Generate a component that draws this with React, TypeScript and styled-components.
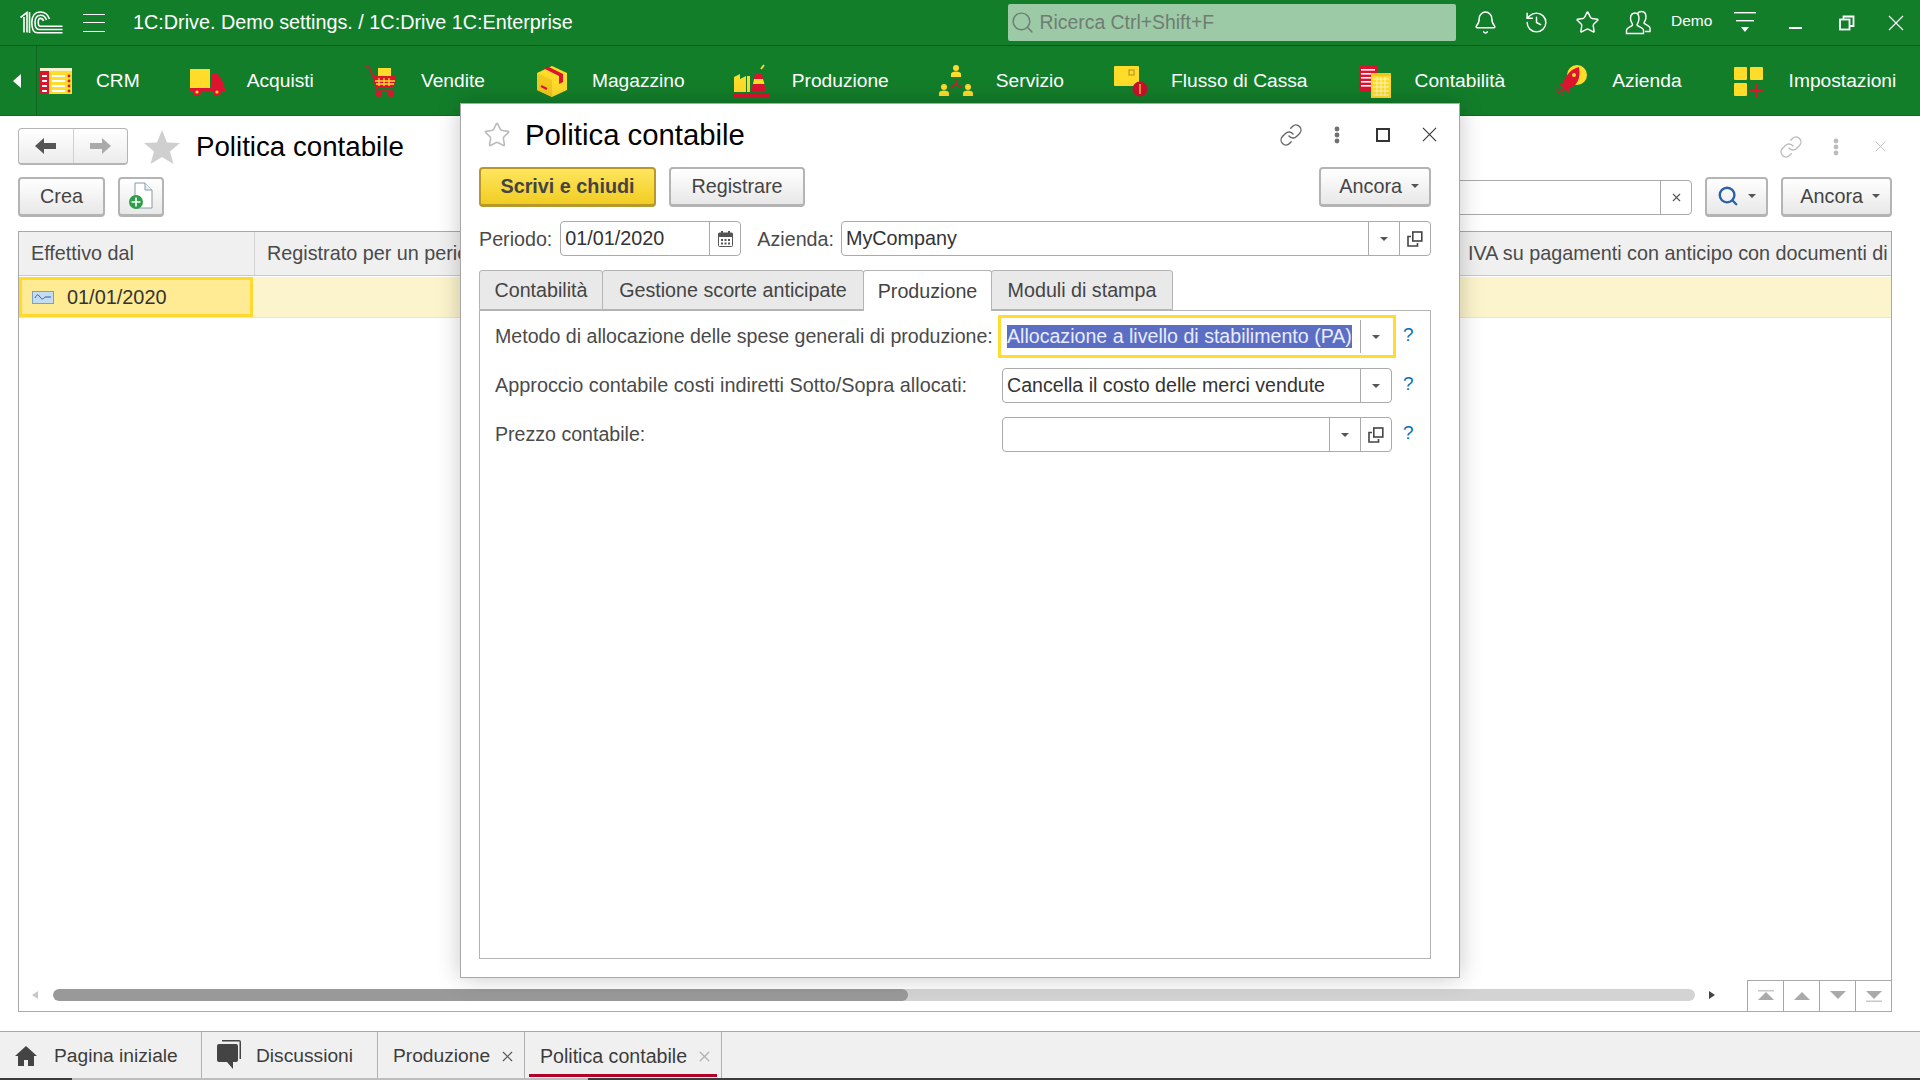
import React from 'react';
import styled, { createGlobalStyle } from 'styled-components';
import { Bell, History, Star, Link as LinkIcon, X, Search as SearchIcon } from 'lucide-react';

const Global = createGlobalStyle`
  html, body { margin: 0; padding: 0; height: 100%; overflow: hidden; background: #fff; }
  #root { height: 100%; }
  * { box-sizing: border-box; }
  body { font-family: "Liberation Sans", Arial, sans-serif; font-size: 19.7px; color: #4a4a4a; }
`;

const Screen = styled.div`
  position: relative; width: 1920px; height: 1080px; display: flex; flex-direction: column; overflow: hidden;
`;
const TopBar = styled.header`
  height: 46px; flex: none; background: #137e2a; border-bottom: 1px solid #0b5a1a; display: flex; align-items: center; color: #fff; padding-left: 20px;
`;
const Burger = styled.div`
  width: 22px; height: 18px; margin-left: 19px; border-top: 1px solid #fff; border-bottom: 1px solid #fff; position: relative;
  &::after { content: ''; position: absolute; left: 0; right: 0; top: 7px; height: 1px; background: #fff; }
`;
const AppTitle = styled.div`
  margin-left: 28px; flex: 1; font-size: 19.8px; white-space: nowrap;
`;
const GlobalSearch = styled.div`
  width: 448px; height: 37px; background: #9ccaa6; border-radius: 2px; color: #6f7d73; display: flex; align-items: center; padding-left: 2px; gap: 5px; font-size: 19.4px; margin-right: 4px;
`;
const TopIcon = styled.div<{ $w?: number }>`
  width: ${p => p.$w ?? 51}px; height: 45px; display: flex; align-items: center; justify-content: center; flex: none; color: #fff;
`;
const UserName = styled.div`
  font-size: 15.5px; margin: -3px 6px 0 7.5px; width: 42px; flex: none; white-space: nowrap;
`;
const FilterIcon = styled.div`
  width: 51px; flex: none; display: flex; justify-content: center;
`;
const Sections = styled.nav`
  height: 70px; flex: none; background: #137e2a; display: flex; align-items: center; position: relative; color: #fff; border-bottom: 1px solid #0f6a22;
`;
const SectionArrow = styled.div`
  width: 37px; height: 100%; flex: none; border-right: 1px solid #0f6520; display: flex; align-items: center; justify-content: center;
  &::before { content: ''; border-style: solid; border-width: 7px 8px 7px 0; border-color: transparent #fff transparent transparent; margin-left: -2px; }
`;
const SectionList = styled.div`
  display: flex; align-items: center; gap: 49px; padding-left: 1px; white-space: nowrap;
`;
const SectionItem = styled.div`
  display: flex; align-items: center; gap: 22px; font-size: 19.2px;
`;
const Page = styled.main`
  flex: 1; min-height: 0; display: flex; flex-direction: column; padding: 12px 28px 19px 18px;
`;
const TitleRow = styled.div`
  height: 37px; display: flex; align-items: center; flex: none;
`;
const NavGroup = styled.div`
  width: 110px; height: 37px; display: flex; border: 1px solid #b4b4b4; border-bottom-width: 2px; border-radius: 4px; background: linear-gradient(#fff, #ececec);
`;
const NavCell = styled.div<{ $first?: boolean }>`
  flex: 1; display: flex; align-items: center; justify-content: center; ${p => (p.$first ? 'border-right: 1px solid #d0d0d0;' : '')}
`;
const PageStar = styled.svg`
  margin-left: 16px; flex: none;
`;
const PageTitle = styled.h1`
  margin: 0 0 0 16px; font-size: 27.7px; font-weight: 400; color: #000; flex: 1; white-space: nowrap;
`;
const GhostIcons = styled.div`
  display: flex; align-items: center; color: #bcbcbc; margin-right: -11px;
`;
const GhostCell = styled.div`
  width: 45px; display: flex; justify-content: center;
`;
const Toolbar = styled.div`
  margin-top: 12px; height: 40px; display: flex; align-items: center; flex: none;
`;
const Btn = styled.button<{ $w: number; $primary?: boolean; $ml?: number; $menu?: boolean }>`
  width: ${p => p.$w}px; height: 40px; flex: none; border-radius: 4px; margin-left: ${p => p.$ml ?? 0}px; display: flex; align-items: center; gap: 9px;
  padding: ${p => (p.$menu ? '0 10px 1px 0' : '0 0 1px')}; justify-content: ${p => (p.$menu ? 'flex-end' : 'center')};
  font: ${p => (p.$primary ? '700' : '400')} 19.8px "Liberation Sans", Arial, sans-serif; color: #444;
  border: 2px solid ${p => (p.$primary ? '#b8982a' : '#b4b4b4')}; border-bottom-width: 3px;
  background: ${p => (p.$primary ? 'linear-gradient(#ffe55e, #f1cd22)' : 'linear-gradient(#fff, #e8e8e8)')};
`;
const Caret = styled.span`
  width: 0; height: 0; border-style: solid; border-width: 4px 4px 0 4px; border-color: #555 transparent transparent transparent; flex: none;
`;
const Spacer = styled.div`
  flex: 1;
`;
const SearchField = styled.div`
  width: 500px; height: 35px; border: 1px solid #aaa; border-radius: 0 4px 4px 0; display: flex; justify-content: flex-end; margin-right: 13px;
`;
const ClearCell = styled.div`
  width: 31px; border-left: 1px solid #aaa; display: flex; align-items: center; justify-content: center; color: #555;
`;
const Table = styled.section`
  margin-top: 14px; flex: 1; min-height: 0; border: 1px solid #a8a8a8; display: flex; flex-direction: column;
`;
const THead = styled.div`
  height: 44px; flex: none; display: flex; background: #f0f0f0; border-bottom: 1px solid #c8c8c8;
`;
const THCell = styled.div<{ $w?: number }>`
  ${p => (p.$w ? `width: ${p.$w}px; flex: none;` : 'flex: 1;')} overflow: hidden; white-space: nowrap; display: flex; align-items: center; padding: 0 0 1px 12px; font-size: 19.8px; color: #4a4a4a;
  & + & { border-left: 1px solid #d4d4d4; }
`;
const TRow = styled.div`
  margin-top: 1px; height: 41px; flex: none; display: flex; background: #fcf4cc; border-bottom: 1px solid #e4e4e4;
`;
const TCellSelected = styled.div`
  width: 234px; flex: none; background: #ffeb93; border: 3px solid #ffd92e; display: flex; align-items: center; padding-left: 10px; gap: 13px; color: #333; font-size: 19.9px;
`;
const TFill = styled.div`
  flex: 1;
`;
const TableFooter = styled.div`
  margin-top: auto; height: 31px; flex: none; display: flex; align-items: flex-start;
`;
const ScrollArea = styled.div`
  flex: 1; display: flex; align-items: center; height: 30px; padding: 0 0 1px 13px;
`;
const ScrollArrow = styled.span<{ $right?: boolean }>`
  width: 0; height: 0; border-style: solid; flex: none;
  ${p => (p.$right
    ? 'border-width: 4px 0 4px 6px; border-color: transparent transparent transparent #444; margin: 0 32px 0 14px;'
    : 'border-width: 4px 6px 4px 0; border-color: transparent #c8c8c8 transparent transparent; margin-right: 15px;')}
`;
const ScrollTrack = styled.div`
  flex: 1; height: 12px; border-radius: 6px; background: #d3d3d3; overflow: hidden;
`;
const ScrollThumb = styled.div`
  width: 855px; height: 100%; background: #999; border-radius: 6px;
`;
const PagerCell = styled.div`
  width: 36px; height: 32px; flex: none; margin-bottom: -1px; border: 1px solid #a8a8a8; border-right-width: 0; display: flex; align-items: center; justify-content: center;
`;
const WinTabs = styled.footer`
  height: 47px; flex: none; display: flex; background: #f0f0f0; border-top: 1px solid #a8a8a8;
`;
const WinTab = styled.div<{ $w: number; $active?: boolean }>`
  width: ${p => p.$w}px; flex: none; position: relative; display: flex; align-items: center; padding: 2px 0 0 15px; gap: 12px; border-right: 1px solid #b0b0b0; font-size: ${p => (p.$active ? 19.6 : 19.2)}px; color: #3c3c3c; white-space: nowrap;
  ${p => (p.$active ? `&::after { content: ''; position: absolute; left: 4px; right: 4px; bottom: 1px; height: 3px; background: #b0002a; }` : '')}
`;
const WinTabLabel = styled.span<{ $ml: number }>`
  margin-left: ${p => p.$ml}px;
`;
const TabClose = styled.span<{ $muted?: boolean }>`
  display: flex; margin-left: -3px; color: ${p => (p.$muted ? '#b0b0b0' : '#555')};
`;
const Strip = styled.div`
  height: 2px; flex: none; display: flex; background: #3c3c3c;
`;
const StripLight = styled.div`
  width: 516px; margin-left: 72px; background: #bdbdbd;
`;
const Modal = styled.div`
  position: absolute; left: 460px; top: 103px; width: 1000px; height: 875px; background: #fff; border: 1px solid #a8a8a8; box-shadow: 0 0 22px rgba(0, 0, 0, 0.22); display: flex; flex-direction: column; padding: 0 28px 18px 18px;
`;
const ModalHead = styled.div`
  height: 63px; flex: none; display: flex; align-items: center; padding: 0 0 2px 4px;
`;
const ModalTitle = styled.h2`
  margin: 0 0 0 14px; flex: 1; font-size: 29.3px; font-weight: 400; color: #000; white-space: nowrap;
`;
const ModalActions = styled.div`
  display: flex; align-items: center; margin-right: -21px; color: #666;
`;
const ActionCell = styled.div`
  width: 46px; display: flex; justify-content: center;
`;
const ModalBar = styled.div`
  height: 40px; flex: none; display: flex; gap: 13px;
`;
const FieldLabel = styled.label<{ $ml?: number }>`
  font-size: 19.7px; color: #4a4a4a; margin-left: ${p => p.$ml ?? 0}px; padding-top: 1px; white-space: nowrap;
`;
const Field = styled.div<{ $w?: number; $ml?: number; $focus?: boolean }>`
  ${p => (p.$w ? `width: ${p.$w}px; flex: none;` : 'flex: 1;')}
  height: 35px; margin-left: ${p => p.$ml ?? 0}px; border: 1px solid #aaa; border-radius: 4px; display: flex; align-items: stretch; background: #fff; font-size: 19.6px; color: #333;
  ${p => (p.$focus ? 'outline: 3px solid #ffdc2e; outline-offset: 1px; border-color: #fff; border-radius: 0;' : '')}
`;
const FieldValue = styled.div`
  flex: 1; min-width: 0; display: flex; align-items: center; padding: 0 0 1px 4px; white-space: nowrap; overflow: hidden;
`;
const HeaderFields = styled.div`
  margin-top: 14px; height: 35px; flex: none; display: flex; align-items: center;
  ${FieldValue} { padding-bottom: 0; font-size: 19.8px; }
`;
const FieldButton = styled.div`
  width: 31px; flex: none; border-left: 1px solid #aaa; display: flex; align-items: center; justify-content: center;
`;
const Selected = styled.span`
  background: #5b6ec4; color: #e8ecff;
`;
const TabStrip = styled.div`
  margin-top: 14px; height: 40px; flex: none; display: flex; position: relative; z-index: 1;
`;
const Tab = styled.div<{ $w: number; $active?: boolean }>`
  width: ${p => p.$w}px; flex: none; height: ${p => (p.$active ? 41 : 40)}px; border: 1px solid #b4b4b4; border-radius: 3px 3px 0 0; margin-right: -1px; display: flex; align-items: center; justify-content: center; font-size: 19.7px; color: #444; white-space: nowrap;
  background: ${p => (p.$active ? '#fff' : '#e9e9e9')}; ${p => (p.$active ? 'border-bottom: none;' : '')}
`;
const TabPanel = styled.div`
  flex: 1; min-height: 0; border: 1px solid #b4b4b4; padding: 8px 0 0 15px; display: grid; grid-template-columns: 507px 390px auto; grid-auto-rows: 35px; row-gap: 14px; align-items: center; align-content: start;
`;
const RowLabel = styled.div<{ $size: number }>`
  font-size: ${p => p.$size}px; color: #4a4a4a; white-space: nowrap; margin-top: -1px;
`;
const Help = styled.div`
  font-size: 19px; color: #0a6fb5; margin: -3px 0 0 11px;
`;

const Tri = ({ c = '#555', s = 4 }: { c?: string; s?: number }) => (
  <svg width={s * 2} height={s} viewBox="0 0 8 4"><path d="M0 0h8L4 4z" fill={c} /></svg>
);
const OpenIcon = () => (
  <svg width="16" height="16" viewBox="0 0 16 16" fill="none" stroke="#444" strokeWidth="1.6">
    <rect x="5.8" y="1" width="9" height="9" />
    <path d="M4 5.5H1v9.5h9.5v-3" />
  </svg>
);
const CalendarGlyph = () => (
  <svg width="15" height="16" viewBox="0 0 15 16">
    <rect x="0.500" y="2" width="14" height="13.500" rx="1" fill="#fff" stroke="#555" />
    <rect x="0.500" y="2" width="14" height="4" fill="#555" />
    <rect x="3" y="0" width="2" height="3.500" fill="#555" /><rect x="10" y="0" width="2" height="3.500" fill="#555" />
    <g fill="#555">
      <rect x="3" y="8" width="2" height="2" /><rect x="6.500" y="8" width="2" height="2" /><rect x="10" y="8" width="2" height="2" />
      <rect x="3" y="11.500" width="2" height="2" /><rect x="6.500" y="11.500" width="2" height="2" /><rect x="10" y="11.500" width="2" height="2" />
    </g>
  </svg>
);
const NavArrow = ({ dir, c }: { dir: 'l' | 'r'; c: string }) => (
  <svg width="21" height="16" viewBox="0 0 21 16" fill={c}>
    {dir === 'l' ? <path d="M0 8l9-8v5h12v6H9v5z" /> : <path d="M21 8l-9-8v5H0v6h12v5z" />}
  </svg>
);
const Dots = ({ c }: { c: string }) => (
  <svg width="6" height="18" viewBox="0 0 6 18" fill={c}><circle cx="3" cy="3" r="2.4" /><circle cx="3" cy="9" r="2.4" /><circle cx="3" cy="15" r="2.4" /></svg>
);
const Logo = () => (
  <svg width="44" height="23" viewBox="0 0 44 23" fill="none" stroke="#fff" strokeWidth="1.6">
    <path d="M0.5 6.5 7 1.5V21.5" />
    <path d="M4 6V21.5M9.5 1V22" />
    <path d="M42.5 21.8H17.5C13 21.8 11.8 17 11.8 11.5 11.8 5 15 1 20.5 1 25 1 28 3.5 29.5 8" />
    <path d="M42.5 18.5H19C16 18.5 15 15 15 11.5 15 7 17 4.2 20.5 4.2 23.5 4.2 25.5 6 26.5 9" />
    <path d="M42.5 15.2H20.5C19 15.2 18.2 13.5 18.2 11.5 18.2 9 19 7.4 20.5 7.4 22 7.4 23 8.4 23.5 10" />
  </svg>
);
const UsersIcon = () => (
  <svg width="26" height="26" viewBox="0 0 26 26" fill="none" stroke="#fff" strokeWidth="1.4">
    <path d="M1.5 23.5v-3.5c0-2 5-3.5 6-5 .5-1-2-3-2-6.5 0-3.5 2-5.500 4.500-5.500s4 2 4 5.500c0 3.500-2 5.500-2 6.500 1 1.500 6.500 3 6.500 5v3.500z" />
    <path d="M12.500 3.500C13.500 2 15 1.500 16.500 1.500c2.500 0 4.500 2 4.500 5.500 0 3.500-2 5-2 6 1 1.500 6 3 6 5v3.500h-5" />
  </svg>
);
const FilterGlyph = () => (
  <svg width="22" height="24" viewBox="0 0 22 24" fill="#fff">
    <rect y="1" width="22" height="1.4" /><rect x="2" y="9" width="18" height="1.4" /><path d="M7 16h8l-4 5z" />
  </svg>
);
const WinMin = () => <svg width="16" height="16" viewBox="0 0 16 16"><rect x="1" y="12" width="13" height="2" fill="#fff" /></svg>;
const WinRestore = () => (
  <svg width="16" height="16" viewBox="0 0 16 16" fill="none" stroke="#fff" strokeWidth="1.800"><rect x="1" y="4.500" width="9.500" height="10" /><path d="M4.500 4V1.500H14.500V11H11" /></svg>
);
const ThinX = ({ s, c }: { s: number; c: string }) => (
  <svg width={s} height={s} viewBox="0 0 16 16" fill="none" stroke={c} strokeWidth="1.2"><path d="M1 1l14 14M15 1L1 15" /></svg>
);
const Y = '#ffdc2a';
const R = '#dc1430';
const SIcon = ({ children }: { children: React.ReactNode }) => (
  <svg width="36" height="36" viewBox="0 0 36 36">{children}</svg>
);
const IconCRM = () => (
  <SIcon>
    <rect x="2" y="5" width="32" height="26" fill={Y} />
    <rect x="2" y="5" width="32" height="3" fill="#f4f0d0" />
    <rect x="2" y="8" width="9" height="23" fill={R} />
    {[12, 17, 22, 27].map(y => (
      <g key={y}>
        <rect x="4" y={y} width="5" height="2" fill="#fff" />
        <rect x="14" y={y} width="13" height="2" fill="#fff" />
        <circle cx="31" cy={y + 1} r="1.400" fill={R} />
      </g>
    ))}
  </SIcon>
);
const IconTruck = () => (
  <SIcon>
    <rect x="1" y="6" width="20" height="19" fill={Y} />
    <path d="M22 11h7l5 8v7H22z" fill={R} />
    <path d="M0 25h36v3H0z" fill={R} />
    <circle cx="8" cy="29" r="4" fill={R} /><circle cx="8" cy="29" r="1.600" fill={Y} />
    <circle cx="28" cy="29" r="4" fill={R} /><circle cx="28" cy="29" r="1.600" fill={Y} />
  </SIcon>
);
const IconCart = () => (
  <SIcon>
    <path d="M3 4h3l4 9 4 14h17" fill="none" stroke={R} strokeWidth="1.500" />
    <rect x="15" y="5" width="13" height="8" fill={Y} />
    <path d="M10 13h23l-2 11H13z" fill={R} />
    <path d="M16 15v8M21 15v8M26 15v8M12 18h20M13 21h18" stroke={Y} strokeWidth="1.300" />
    <circle cx="16" cy="31" r="3" fill={R} /><circle cx="28" cy="31" r="3" fill={R} />
  </SIcon>
);
const IconBox = () => (
  <SIcon>
    <path d="M18 3l15 7v17l-15 7-15-7V10z" fill={Y} />
    <path d="M18 17v17l-15-7V10z" fill="#f3c91f" />
    <path d="M10 5.500l15 7.500v8l4-2v-8L14 3.500z" fill={R} />
    <path d="M7 23l6 3" stroke={R} strokeWidth="2" />
  </SIcon>
);
const IconFactory = () => (
  <SIcon>
    <path d="M0 29V14l6-3v5l6-3v16z" fill={Y} />
    <rect x="13" y="13" width="3" height="16" fill={Y} />
    <path d="M21 11h7l4 18H17z" fill={R} />
    <path d="M20 16h9l1.500 5H19z" fill={Y} />
    <path d="M27 6l3-4" stroke={Y} strokeWidth="1.800" />
    <rect y="30" width="35" height="4" fill={R} />
  </SIcon>
);
const Person = ({ x, y }: { x: number; y: number }) => (
  <g fill={Y}><circle cx={x} cy={y} r="3" /><path d={`M${x - 5} ${y + 9}v-3c0-1.500 2-2.500 5-2.500s5 1 5 2.500v3z`} /></g>
);
const IconService = () => (
  <SIcon>
    <Person x={18} y={5} /><Person x={6} y={24} /><Person x={30} y={24} />
    <path d="M18 16v5M18 21l-6 4M18 21l6 4" stroke={R} strokeWidth="1.400" fill="none" />
  </SIcon>
);
const IconCash = () => (
  <SIcon>
    <rect x="1" y="3" width="25" height="20" rx="1" fill={Y} />
    <rect x="16" y="7" width="5" height="5" fill="none" stroke="#b89b1f" strokeWidth="1.200" />
    <circle cx="27" cy="26" r="7.500" fill="#c9102e" />
    <path d="M27 21v10" stroke={Y} strokeWidth="1.200" />
  </SIcon>
);
const IconAccount = () => (
  <SIcon>
    <rect x="2" y="2" width="19" height="27" fill={R} />
    {[6, 10, 14, 18, 22].map(y => <rect key={y} x="4" y={y} width="14" height="1.600" fill="#fff" />)}
    <rect x="14" y="10" width="20" height="25" fill={Y} />
    <g stroke="#fff6c0" strokeWidth="1"><path d="M16 16h16M16 20h16M16 24h16M16 28h16M16 32h16M20 14v19M24 14v19M28 14v19" /></g>
    <rect x="14" y="10" width="20" height="3" fill="#f0c81c" />
  </SIcon>
);
const IconRocket = () => (
  <SIcon>
    <circle cx="23" cy="12" r="10" fill={Y} />
    <path d="M25 4C17 6 12 12 9 20l-4 1 4 3-1 4 4-1 3 3 1-5c7-3 11-9 9-21z" fill={R} />
    <circle cx="20" cy="12" r="2" fill={Y} />
    <path d="M7 27l-3 3M9 30l-2 3M4 25l-2 2" stroke={R} strokeWidth="1.200" />
  </SIcon>
);
const IconSettings = () => (
  <SIcon>
    <rect x="3" y="4" width="13" height="13" rx="1" fill={Y} />
    <rect x="19" y="4" width="13" height="13" rx="1" fill={Y} />
    <rect x="3" y="20" width="13" height="13" rx="1" fill={Y} />
    <path d="M25 21v13M19 27.500h13" stroke={R} strokeWidth="2" />
  </SIcon>
);
const SmallDoc = () => (
  <svg width="26" height="28" viewBox="0 0 26 28">
    <path d="M7 1h10l7 7v18H7z" fill="#fff" stroke="#8a9aa8" strokeWidth="1" />
    <path d="M17 1v7h7" fill="#e8eef2" stroke="#8a9aa8" strokeWidth="1" />
    <circle cx="8" cy="20" r="7" fill="#2f9e4a" />
    <path d="M8 15.500v9M3.500 20h9" stroke="#fff" strokeWidth="1.600" />
  </svg>
);
const RowIcon = () => (
  <svg width="22" height="13" viewBox="0 0 22 13">
    <rect x=".5" y=".5" width="21" height="12" fill="#c4dcf2" stroke="#7f9fc0" />
    <path d="M3 7c2-4 3-4 5-1s3 2 5 0h6" fill="none" stroke="#2a5cb0" strokeWidth="1" />
  </svg>
);
const HomeIcon = () => (
  <svg width="22" height="20" viewBox="0 0 22 20" fill="#444"><path d="M11 0L0 10h3v10h6v-6h4v6h6V10h3z" /></svg>
);
const ChatIcon = () => (
  <svg width="24" height="34" viewBox="0 0 24 34" fill="#444">
    <path d="M5 1h17a2 2 0 0 1 2 2v17h-1.500V2.500H5z" />
    <path d="M2 5h17a2 2 0 0 1 2 2v14a2 2 0 0 1-2 2h-3v7l-6-7H2a2 2 0 0 1-2-2V7a2 2 0 0 1 2-2z" />
  </svg>
);
const Pager = ({ up, bar }: { up: boolean; bar: boolean }) => (
  <svg width="16" height="12" viewBox="0 0 16 12" fill="#aaa">
    {bar && <rect y={up ? 0 : 10.5} width="16" height="1.500" fill="#c8c8c8" />}
    <path d={up ? 'M8 2l8 8H0z' : 'M0 1h16l-8 8z'} />
  </svg>
);

const sections: [string, React.ReactNode][] = [
  ['CRM', <IconCRM />], ['Acquisti', <IconTruck />], ['Vendite', <IconCart />], ['Magazzino', <IconBox />],
  ['Produzione', <IconFactory />], ['Servizio', <IconService />], ['Flusso di Cassa', <IconCash />],
  ['Contabilità', <IconAccount />], ['Azienda', <IconRocket />], ['Impostazioni', <IconSettings />],
];

export default function App() {
  return (
    <Screen>
      <Global />
      <TopBar>
        <Logo />
        <Burger />
        <AppTitle>1C:Drive. Demo settings. / 1C:Drive 1C:Enterprise</AppTitle>
        <GlobalSearch><SearchIcon size={25} strokeWidth={1.4} color="#6f7d73" />Ricerca Ctrl+Shift+F</GlobalSearch>
        <TopIcon><Bell size={25} strokeWidth={1.4} /></TopIcon>
        <TopIcon><History size={25} strokeWidth={1.4} /></TopIcon>
        <TopIcon><Star size={25} strokeWidth={1.4} /></TopIcon>
        <TopIcon><UsersIcon /></TopIcon>
        <UserName>Demo</UserName>
        <FilterIcon><FilterGlyph /></FilterIcon>
        <TopIcon><WinMin /></TopIcon>
        <TopIcon><WinRestore /></TopIcon>
        <TopIcon $w={48}><ThinX s={16} c="#fff" /></TopIcon>
      </TopBar>
      <Sections>
        <SectionArrow />
        <SectionList>
          {sections.map(([name, icon]) => (
            <SectionItem key={name}>{icon}<span>{name}</span></SectionItem>
          ))}
        </SectionList>
      </Sections>
      <Page>
        <TitleRow>
          <NavGroup>
            <NavCell $first><NavArrow dir="l" c="#555" /></NavCell>
            <NavCell><NavArrow dir="r" c="#aaa" /></NavCell>
          </NavGroup>
          <PageStar width="36" height="34" viewBox="0 0 36 34"><path d="M18 0l5 12.500 13 .5-10 8.500 3.500 12.500L18 27 6.500 34 10 21.500 0 13l13-.5z" fill="#cfcfcf" /></PageStar>
          <PageTitle>Politica contabile</PageTitle>
          <GhostIcons>
            <GhostCell><LinkIcon size={24} strokeWidth={1.4} /></GhostCell>
            <GhostCell><Dots c="#bcbcbc" /></GhostCell>
            <GhostCell><ThinX s={11} c="#bcbcbc" /></GhostCell>
          </GhostIcons>
        </TitleRow>
        <Toolbar>
          <Btn $w={87}>Crea</Btn>
          <Btn $w={46} $ml={13}><SmallDoc /></Btn>
          <Spacer />
          <SearchField><ClearCell><X size={13} strokeWidth={2} /></ClearCell></SearchField>
          <Btn $w={63}><SearchIcon size={22} strokeWidth={2.6} color="#2a62a8" /><Caret /></Btn>
          <Btn $w={111} $ml={13} $menu>Ancora<Caret /></Btn>
        </Toolbar>
        <Table>
          <THead>
            <THCell $w={235}>Effettivo dal</THCell>
            <THCell>Registrato per un periodo</THCell>
            <THCell $w={436}>IVA su pagamenti con anticipo con documenti di chiusura</THCell>
          </THead>
          <TRow>
            <TCellSelected><RowIcon />01/01/2020</TCellSelected>
            <TFill />
          </TRow>
          <TableFooter>
            <ScrollArea>
              <ScrollArrow />
              <ScrollTrack><ScrollThumb /></ScrollTrack>
              <ScrollArrow $right />
            </ScrollArea>
            <PagerCell><Pager up bar /></PagerCell>
            <PagerCell><Pager up bar={false} /></PagerCell>
            <PagerCell><Pager up={false} bar={false} /></PagerCell>
            <PagerCell><Pager up={false} bar /></PagerCell>
          </TableFooter>
        </Table>
      </Page>
      <WinTabs>
        <WinTab $w={202}><HomeIcon /><WinTabLabel $ml={5}>Pagina iniziale</WinTabLabel></WinTab>
        <WinTab $w={176}><ChatIcon /><WinTabLabel $ml={3}>Discussioni</WinTabLabel></WinTab>
        <WinTab $w={147}>Produzione<TabClose><X size={17} strokeWidth={1.6} /></TabClose></WinTab>
        <WinTab $w={197} $active>Politica contabile<TabClose $muted><X size={17} strokeWidth={1.8} /></TabClose></WinTab>
      </WinTabs>
      <Strip><StripLight /></Strip>

      <Modal>
        <ModalHead>
          <Star size={28} strokeWidth={1.4} color="#bdbdbd" />
          <ModalTitle>Politica contabile</ModalTitle>
          <ModalActions>
            <ActionCell><LinkIcon size={24} strokeWidth={1.4} /></ActionCell>
            <ActionCell><Dots c="#707070" /></ActionCell>
            <ActionCell><svg width="14" height="14" viewBox="0 0 14 14" fill="none" stroke="#333" strokeWidth="2"><rect x="1" y="1" width="12" height="12" /></svg></ActionCell>
            <ActionCell><ThinX s={15} c="#333" /></ActionCell>
          </ModalActions>
        </ModalHead>
        <ModalBar>
          <Btn $w={177} $primary>Scrivi e chiudi</Btn>
          <Btn $w={136}>Registrare</Btn>
          <Spacer />
          <Btn $w={112} $menu>Ancora<Caret /></Btn>
        </ModalBar>
        <HeaderFields>
          <FieldLabel>Periodo:</FieldLabel>
          <Field $w={181} $ml={8}>
            <FieldValue>01/01/2020</FieldValue>
            <FieldButton><CalendarGlyph /></FieldButton>
          </Field>
          <FieldLabel $ml={16}>Azienda:</FieldLabel>
          <Field $ml={7}>
            <FieldValue>MyCompany</FieldValue>
            <FieldButton><Tri /></FieldButton>
            <FieldButton><OpenIcon /></FieldButton>
          </Field>
        </HeaderFields>
        <TabStrip>
          <Tab $w={124}>Contabilità</Tab>
          <Tab $w={262}>Gestione scorte anticipate</Tab>
          <Tab $w={129} $active>Produzione</Tab>
          <Tab $w={182}>Moduli di stampa</Tab>
        </TabStrip>
        <TabPanel>
          <RowLabel $size={19.6}>Metodo di allocazione delle spese generali di produzione:</RowLabel>
          <Field $focus>
            <FieldValue><Selected>Allocazione a livello di stabilimento (PA)</Selected></FieldValue>
            <FieldButton><Tri /></FieldButton>
          </Field>
          <Help>?</Help>
          <RowLabel $size={19.85}>Approccio contabile costi indiretti Sotto/Sopra allocati:</RowLabel>
          <Field>
            <FieldValue>Cancella il costo delle merci vendute</FieldValue>
            <FieldButton><Tri /></FieldButton>
          </Field>
          <Help>?</Help>
          <RowLabel $size={19.6}>Prezzo contabile:</RowLabel>
          <Field>
            <FieldValue />
            <FieldButton><Tri /></FieldButton>
            <FieldButton><OpenIcon /></FieldButton>
          </Field>
          <Help>?</Help>
        </TabPanel>
      </Modal>
    </Screen>
  );
}
